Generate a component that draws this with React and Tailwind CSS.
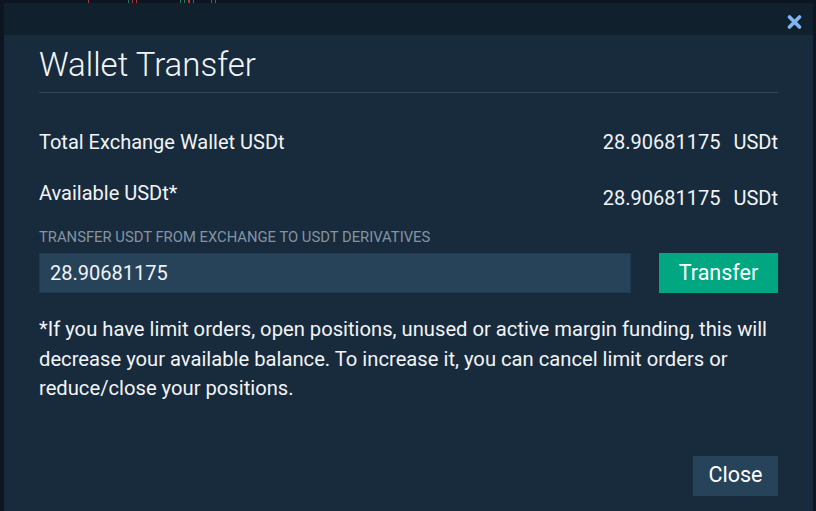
import React from 'react';

const font = { fontFamily: 'Roboto, "Noto Sans", sans-serif' };

function Row({ label, value, shift }) {
  return (
    <div className="flex justify-between items-start h-[30px]">
      <span className="leading-[30px] text-[20px] text-[#f2f4f6]">{label}</span>
      <span className={`flex gap-[13px] leading-[30px] text-[20px] text-[#f2f4f6] ${shift ? 'mt-[5px]' : ''}`}>
        <span>{value}</span>
        <span>USDt</span>
      </span>
    </div>
  );
}

export default function App() {
  return (
    <div className="w-[816px] h-[511px] overflow-hidden bg-[#0d1620] flex flex-col" style={font}>
      {/* bits of the chart behind the modal */}
      <div className="h-[3px] shrink-0 flex items-end gap-[3px] pl-[88px]">
        <span className="w-[1px] h-[3px] bg-[#a83a3a]" />
        <span className="w-[1px] h-[3px] bg-[#1f7a5a] ml-[36px]" />
        <span className="w-[1px] h-[3px] bg-[#a83a3a]" />
        <span className="w-[1px] h-[3px] bg-[#a83a3a]" />
        <span className="w-[1px] h-[3px] bg-[#1f7a5a] ml-[40px]" />
        <span className="w-[1px] h-[3px] bg-[#1f7a5a]" />
        <span className="w-[2px] h-[3px] bg-[#a83a3a]" />
        <span className="w-[1px] h-[3px] bg-[#1f7a5a]" />
        <span className="w-[1px] h-[3px] bg-[#a83a3a] ml-[14px]" />
        <span className="w-[1px] h-[3px] bg-[#a83a3a]" />
      </div>
      <div className="flex flex-1 pl-[4px] pr-[3px]">
        <div className="flex-1 flex flex-col rounded-t-[4px] overflow-hidden bg-[#182b3d]">
          <div className="h-[32px] shrink-0 bg-[#11202d] flex justify-end items-center pr-[11px]">
            <svg width="15" height="14" viewBox="0 0 15 14" className="mt-[5px]">
              <path d="M2.5 2 L12.5 12 M12.5 2 L2.5 12" stroke="#7fb6f2" strokeWidth="3.6" strokeLinecap="round" />
            </svg>
          </div>
          <div className="flex flex-col px-[35px]">
            <div className="h-[58px] flex items-center border-b border-[#35475a]">
              <h1 className="text-[33px] font-light text-[#f4f6f8] leading-none mt-[1px]">Wallet Transfer</h1>
            </div>
            <div className="mt-[34px]">
              <Row label="Total Exchange Wallet USDt" value="28.90681175" />
            </div>
            <div className="mt-[21px]">
              <Row label="Available USDt*" value="28.90681175" shift />
            </div>
            <div className="mt-[19px] h-[20px] leading-[20px] text-[14.8px] text-[#8594a2] uppercase">
              Transfer USDT from exchange to USDT derivatives
            </div>
            <div className="mt-[6px] flex gap-[28px] h-[40px]">
              <div className="flex-1 flex items-center bg-[#27435a] border border-[#1f3a52] px-[10px] text-[20px] text-[#f2f4f6]">
                28.90681175
              </div>
              <button className="w-[119px] bg-[#01a781] text-white text-[21.5px]">Transfer</button>
            </div>
            <p className="mt-[22px] text-[20.2px] leading-[29.5px] text-[#f2f4f6]">
              *If you have limit orders, open positions, unused or active margin funding, this will decrease your available balance. To increase it, you can cancel limit orders or reduce/close your positions.
            </p>
            <div className="mt-[52px] flex justify-end">
              <button className="w-[85px] h-[40px] bg-[#27435a] text-white text-[21.5px]">Close</button>
            </div>
          </div>
        </div>
      </div>
    </div>
  );
}
